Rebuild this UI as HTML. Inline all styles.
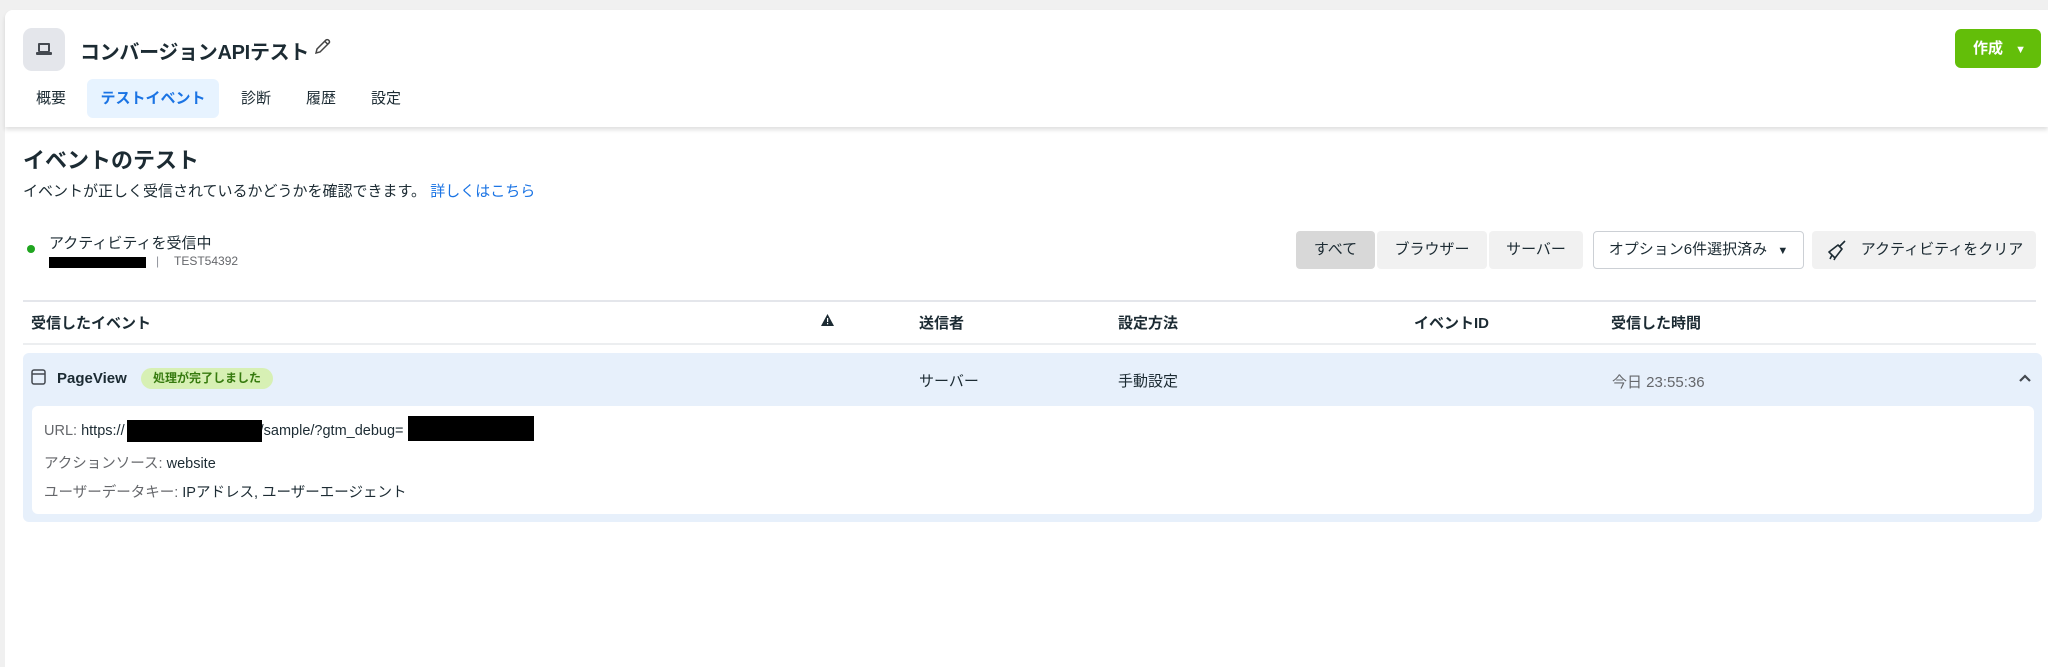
<!DOCTYPE html>
<html><head><meta charset="utf-8"><style>
*{box-sizing:border-box;margin:0;padding:0}
body{width:2048px;height:667px;background:#f0f0f0;font-family:"Liberation Sans","Noto Sans CJK JP",sans-serif;color:#1c2b33;position:relative;overflow:hidden}
.a{position:absolute;white-space:nowrap}
.card{position:absolute;left:5px;top:10px;width:2043px;height:657px;background:#fff;border-top-left-radius:8px}
.hdr{position:absolute;left:5px;top:10px;width:2043px;height:117px;background:#fff;box-shadow:0 3px 4px rgba(0,0,0,.12);border-top-left-radius:8px}
.tab{position:absolute;top:79px;height:39px;line-height:39px;font-size:15px;color:#1c2b33}
.seg{position:absolute;top:231px;height:38px;line-height:38px;font-size:15px;text-align:center;background:#f1f1f1;color:#1c2b33;border-radius:4px}
.th{position:absolute;top:312px;font-size:15px;font-weight:bold;color:#1c2b33}
.bar{position:absolute;background:#000}
</style></head><body>
<div class="card"></div>
<div class="hdr"></div>
<div class="a" style="left:23px;top:28px;width:42px;height:43px;background:#e4e6eb;border-radius:9px"></div>
<svg class="a" style="left:35px;top:41px" width="18" height="16" viewBox="0 0 18 16"><rect x="3" y="2" width="12" height="9" rx="1" fill="#444950"/><rect x="5" y="4" width="8" height="6" fill="#e4e6eb"/><rect x="1" y="11" width="16" height="3" rx="1" fill="#444950"/></svg>
<div class="a" style="left:80px;top:36px;font-size:20px;font-weight:bold;color:#1c2b33;letter-spacing:-0.3px">コンバージョンAPIテスト</div>
<svg class="a" style="left:312px;top:37px" width="20" height="20" viewBox="0 0 20 20"><path d="M4 16 L5 12 L14 3 Q15.5 2 17 3.5 Q18 5 17 6 L8 15 Z M13 4.5 L15.5 7" fill="none" stroke="#444" stroke-width="1.5"/></svg>
<div class="a" style="left:1955px;top:29px;width:86px;height:39px;background:#63be09;border-radius:6px;color:#fff;font-size:15px;font-weight:bold;line-height:39px;padding-left:18px">作成 <span style="font-size:11px;margin-left:8px">▼</span></div>
<div class="tab" style="left:36px">概要</div>
<div class="tab" style="left:87px;width:132px;background:#e7f3ff;border-radius:6px;text-align:center;color:#1b74e4;font-weight:bold">テストイベント</div>
<div class="tab" style="left:241px">診断</div>
<div class="tab" style="left:306px">履歴</div>
<div class="tab" style="left:371px">設定</div>
<div class="a" style="left:23px;top:143px;font-size:22px;font-weight:bold">イベントのテスト</div>
<div class="a" style="left:23px;top:180px;font-size:15px">イベントが正しく受信されているかどうかを確認できます。 <span style="color:#1b74e4">詳しくはこちら</span></div>
<div class="a" style="left:27px;top:245px;width:8px;height:8px;border-radius:50%;background:#20a520"></div>
<div class="a" style="left:49px;top:232px;font-size:15px">アクティビティを受信中</div>
<div class="bar" style="left:49px;top:257px;width:97px;height:11px"></div>
<div class="a" style="left:156px;top:254px;font-size:12px;color:#90949c">|</div>
<div class="a" style="left:174px;top:254px;font-size:12px;color:#65676b">TEST54392</div>
<div class="seg" style="left:1296px;width:79px;background:#d8d8d8">すべて</div>
<div class="seg" style="left:1377px;width:110px">ブラウザー</div>
<div class="seg" style="left:1489px;width:94px">サーバー</div>
<div class="seg" style="left:1593px;width:211px;background:#fff;border:1px solid #ccd0d5;line-height:36px">オプション6件選択済み <span style="font-size:11px;margin-left:6px">▼</span></div>
<div class="seg" style="left:1812px;width:224px;padding-left:36px">アクティビティをクリア</div>
<svg class="a" style="left:1826px;top:239px" width="22" height="22" viewBox="0 0 22 22"><path d="M19 2 L13 8 M12 6 L16 10 L9 19 L3 13 Z M6 16 L4 20 M9 19 L8 21" fill="none" stroke="#1c2b33" stroke-width="1.6" stroke-linejoin="round"/></svg>
<div class="a" style="left:23px;top:300px;width:2013px;height:2px;background:#e4e6eb"></div>
<div class="a" style="left:23px;top:343px;width:2013px;height:2px;background:#eceef0"></div>
<div class="th" style="left:31px">受信したイベント</div>
<svg class="a" style="left:821px;top:314px" width="13" height="12" viewBox="0 0 13 12"><path d="M6.5 0 L13 12 L0 12 Z" fill="#1c2b33"/><rect x="6" y="4" width="1.2" height="4" fill="#fff"/><rect x="6" y="9" width="1.2" height="1.3" fill="#fff"/></svg>
<div class="th" style="left:919px">送信者</div>
<div class="th" style="left:1118px">設定方法</div>
<div class="th" style="left:1414px">イベントID</div>
<div class="th" style="left:1611px">受信した時間</div>
<div class="a" style="left:23px;top:353px;width:2019px;height:169px;background:#e7f0fb;border-radius:6px"></div>
<svg class="a" style="left:31px;top:369px" width="15" height="16" viewBox="0 0 15 16"><rect x="1" y="1" width="13" height="14" rx="2" fill="none" stroke="#444950" stroke-width="1.5"/><line x1="1" y1="5" x2="14" y2="5" stroke="#444950" stroke-width="1.5"/></svg>
<div class="a" style="left:57px;top:370px;font-size:15px;font-weight:bold">PageView</div>
<div class="a" style="left:141px;top:368px;width:132px;height:21px;background:#d7f0b4;border-radius:11px;font-size:12px;font-weight:bold;color:#367a0e;line-height:21px;text-align:center">処理が完了しました</div>
<div class="a" style="left:919px;top:370px;font-size:15px">サーバー</div>
<div class="a" style="left:1118px;top:370px;font-size:15px">手動設定</div>
<div class="a" style="left:1612px;top:371px;font-size:15px;color:#65676b">今日 23:55:36</div>
<svg class="a" style="left:2018px;top:373px" width="14" height="10" viewBox="0 0 14 10"><path d="M2 8 L7 3 L12 8" fill="none" stroke="#444950" stroke-width="2.2"/></svg>
<div class="a" style="left:32px;top:406px;width:2002px;height:108px;background:#fff;border-radius:6px"></div>
<div class="a" style="left:44px;top:423px;font-size:14.5px;color:#1c2b33"><span style="color:#65676b">URL:</span> https://<span style="display:inline-block;width:135px"></span>/sample/?gtm_debug=</div>
<div class="bar" style="left:127px;top:420px;width:135px;height:22px"></div>
<div class="bar" style="left:408px;top:416px;width:126px;height:25px"></div>
<div class="a" style="left:44px;top:452px;font-size:14.5px"><span style="color:#65676b">アクションソース:</span> website</div>
<div class="a" style="left:44px;top:481px;font-size:14.5px"><span style="color:#65676b">ユーザーデータキー:</span> IPアドレス, ユーザーエージェント</div>
</body></html>
